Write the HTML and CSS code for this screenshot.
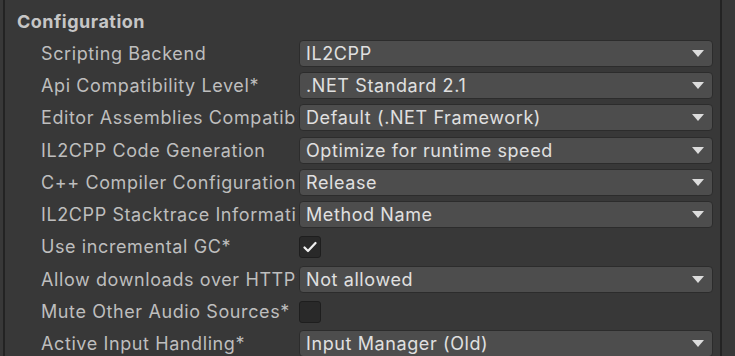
FILE: index.html
```html
<!DOCTYPE html>
<html lang="en">
<head>
    <meta charset="UTF-8">
    <title>Player Settings - Configuration</title>
    <link rel="stylesheet" href="styles.css">
</head>
<body>
    <div class="panel">
        <div class="heading">Configuration</div>

        <div class="row">
            <div class="label">Scripting Backend</div>
            <div class="dropdown"><span>IL2CPP</span><i class="arrow"></i></div>
        </div>
        <div class="row">
            <div class="label">Api Compatibility Level*</div>
            <div class="dropdown"><span>.NET Standard 2.1</span><i class="arrow"></i></div>
        </div>
        <div class="row">
            <div class="label">Editor Assemblies Compatibility Level</div>
            <div class="dropdown"><span>Default (.NET Framework)</span><i class="arrow"></i></div>
        </div>
        <div class="row">
            <div class="label">IL2CPP Code Generation</div>
            <div class="dropdown"><span>Optimize for runtime speed</span><i class="arrow"></i></div>
        </div>
        <div class="row">
            <div class="label">C++ Compiler Configuration</div>
            <div class="dropdown"><span>Release</span><i class="arrow"></i></div>
        </div>
        <div class="row">
            <div class="label">IL2CPP Stacktrace Information</div>
            <div class="dropdown"><span>Method Name</span><i class="arrow"></i></div>
        </div>
        <div class="row">
            <div class="label">Use incremental GC*</div>
            <div class="checkbox">
                <svg width="14" height="12" viewBox="0 0 14 12">
                    <polyline points="1.5,6.5 5,10 12.5,2" fill="none" stroke="#f0f0f0" stroke-width="2.2" stroke-linecap="round" stroke-linejoin="round"/>
                </svg>
            </div>
        </div>
        <div class="row">
            <div class="label">Allow downloads over HTTP*</div>
            <div class="dropdown"><span>Not allowed</span><i class="arrow"></i></div>
        </div>
        <div class="row">
            <div class="label">Mute Other Audio Sources*</div>
            <div class="checkbox"></div>
        </div>
        <div class="row">
            <div class="label">Active Input Handling*</div>
            <div class="dropdown"><span>Input Manager (Old)</span><i class="arrow"></i></div>
        </div>
    </div>
</body>
</html>
```

FILE: styles.css
```css
body {
    margin: 0;
    padding: 0;
    height: 356px;
    overflow: hidden;
    background-color: #383838;
    font-family: Inter, "Noto Sans", sans-serif;
    color: #c4c4c4;
}

.panel {
    margin-left: 3px;
    width: 719px;
    height: 356px;
    border-left: 2px solid #232323;
    border-right: 2px solid #232323;
    padding-left: 12px;
    box-sizing: border-box;
    padding-top: 7px;
}

.heading {
    height: 30px;
    line-height: 30px;
    font-size: 18px;
    letter-spacing: 0.5px;
    font-weight: 700;
    color: #c6c6c6;
}

.row {
    display: flex;
    align-items: center;
    height: 32.3px;
    padding-left: 24px;
}

.label {
    width: 256px;
    margin-right: 2px;
    flex: none;
    font-size: 18px;
    letter-spacing: 0.6px;
    white-space: nowrap;
    overflow: hidden;
    color: #bebebe;
}

.dropdown {
    width: 414px;
    height: 27px;
    box-sizing: border-box;
    display: flex;
    align-items: center;
    justify-content: space-between;
    padding: 0 8px 0 6px;
    background-color: #4d4d4d;
    border: 1px solid #2c2c2c;
    border-radius: 4px;
    font-size: 18px;
    letter-spacing: 0.6px;
    color: #e0e0e0;
}

.arrow {
    width: 0;
    height: 0;
    border-left: 6px solid transparent;
    border-right: 6px solid transparent;
    border-top: 7px solid #dcdcdc;
}

.checkbox {
    width: 22px;
    height: 22px;
    box-sizing: border-box;
    background-color: #292929;
    border: 1px solid #1e1e1e;
    border-radius: 3px;
    display: flex;
    align-items: center;
    justify-content: center;
}
```
